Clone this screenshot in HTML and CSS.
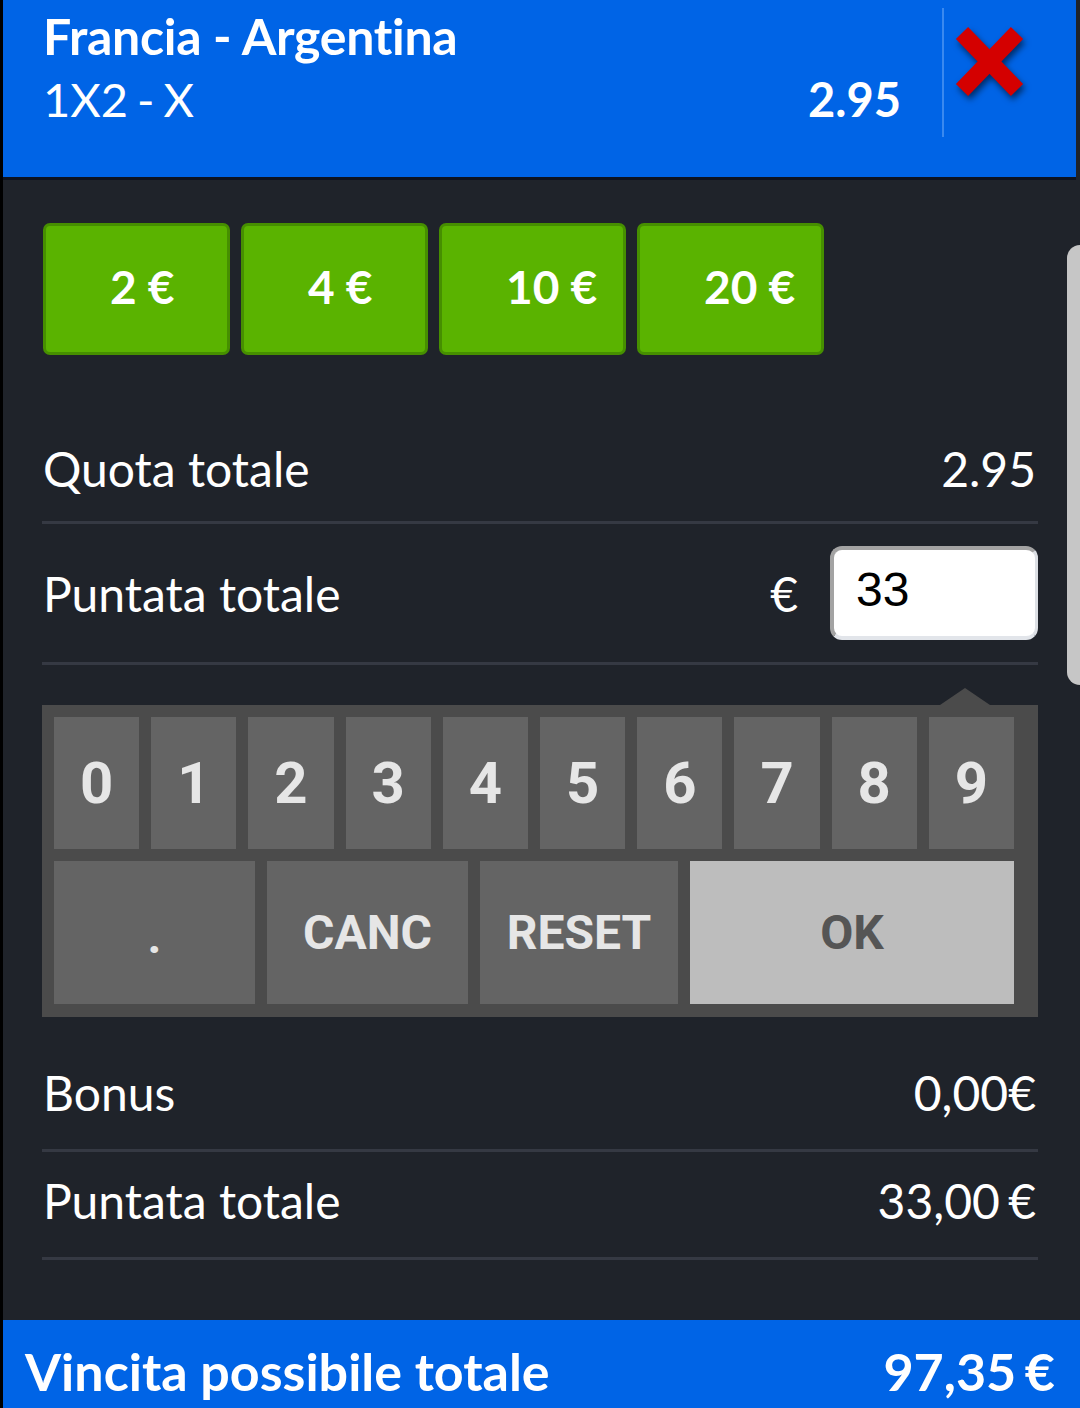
FILE: index.html
```html
<!DOCTYPE html>
<html lang="it">
<head>
    <meta charset="UTF-8">
    <meta name="viewport" content="width=device-width, initial-scale=1.0">
    <title>Schedina - Francia - Argentina</title>
    <link rel="stylesheet" href="styles.css">
</head>
<body>

    <div class="page">
        <div class="bet-header">
            <div class="bet-info">
                <div class="bet-match">Francia - Argentina</div>
                <div class="bet-line">
                    <span class="bet-outcome">1X2 - X</span>
                    <span class="bet-odd">2.95</span>
                </div>
            </div>
            <div class="bet-divider"></div>
            <button class="bet-close" aria-label="Rimuovi">
                <svg viewBox="0 0 80 80" width="80" height="80">
                    <line x1="12" y1="11" x2="67" y2="68" stroke="#d40000" stroke-width="17"/>
                    <line x1="67" y1="11" x2="12" y2="68" stroke="#d40000" stroke-width="17"/>
                </svg>
            </button>
        </div>

        <div class="content">
            <div class="stakes">
                <button class="stake">2 €</button>
                <button class="stake">4 €</button>
                <button class="stake">10 €</button>
                <button class="stake">20 €</button>
            </div>

            <div class="row row-quota">
                <span>Quota totale</span>
                <span>2.95</span>
            </div>

            <div class="row row-stake">
                <span>Puntata totale</span>
                <div class="stake-input">
                    <span class="currency">€</span>
                    <div class="amount-box">33</div>
                </div>
            </div>

            <div class="keypad">
                <div class="keys-digits">
                    <button class="key">0</button>
                    <button class="key">1</button>
                    <button class="key">2</button>
                    <button class="key">3</button>
                    <button class="key">4</button>
                    <button class="key">5</button>
                    <button class="key">6</button>
                    <button class="key">7</button>
                    <button class="key">8</button>
                    <button class="key">9</button>
                </div>
                <div class="keys-actions">
                    <button class="key key-action key-dot">.</button>
                    <button class="key key-action">CANC</button>
                    <button class="key key-action">RESET</button>
                    <button class="key key-action key-ok">OK</button>
                </div>
            </div>

            <div class="row row-bonus">
                <span>Bonus</span>
                <span>0,00€</span>
            </div>

            <div class="row row-total">
                <span>Puntata totale</span>
                <span class="tight">33,00 €</span>
            </div>
        </div>

        <div class="win-bar">
            <span>Vincita possibile totale</span>
            <span class="tight">97,35 €</span>
        </div>

        <!-- scroll indicator on the right side -->
        <div class="scroll-thumb"></div>
    </div>

</body>
</html>
```

FILE: styles.css
```css
* {
    box-sizing: border-box;
}

body {
    margin: 0;
    background-color: #000000;
    font-family: 'Lato', 'Open Sans', sans-serif;
    color: #ffffff;
}

button {
    font-family: inherit;
    border: none;
    cursor: pointer;
    padding: 0;
}

.page {
    position: relative;
    margin-left: 3px;
    min-height: 1408px;
    background-color: #1f232a;
    overflow: hidden;
}

/* Header with the selected match */
.bet-header {
    display: flex;
    height: 180px;
    margin-right: 4px;
    background-color: #0064e6;
    border-bottom: 3px solid #0d1320;
}

.bet-info {
    width: 898px;
    padding: 6px 0 0 40px;
}

.bet-match {
    font-size: 50px;
    font-weight: 700;
    line-height: 60px;
    letter-spacing: -0.3px;
}

.bet-line {
    display: flex;
    justify-content: space-between;
    margin-top: 4px;
    font-size: 47px;
    line-height: 58px;
}

.bet-outcome {
    word-spacing: -3px;
}

.bet-odd {
    font-weight: 700;
}

.bet-divider {
    width: 2px;
    height: 129px;
    margin: 8px 0 0 41px;
    background-color: #3a89ef;
}

.bet-close {
    width: 80px;
    height: 80px;
    margin: 22px 0 0 6px;
    background: none;
}

.bet-close svg {
    display: block;
    filter: drop-shadow(2px 4px 3px rgba(0, 0, 0, 0.55));
}

/* Main content */
.content {
    padding: 0 42px 0 39px;
}

.stakes {
    display: flex;
    gap: 11px;
    margin: 43px 0 0 1px;
}

.stake {
    width: 187px;
    height: 132px;
    padding: 0 0 6px 64px;
    text-align: left;
    font-size: 46px;
    font-weight: 700;
    color: #ffffff;
    background-color: #5ab300;
    border: 3px solid #468f00;
    border-radius: 7px;
}

.row {
    display: flex;
    justify-content: space-between;
    align-items: center;
    font-size: 48px;
    border-bottom: 3px solid #353943;
    padding: 0 2px 0 1px;
}

.tight {
    word-spacing: -4px;
}

.row-quota {
    height: 108px;
    margin-top: 61px;
}

.row-stake {
    height: 141px;
}

.stake-input {
    display: flex;
    align-items: center;
}

.currency {
    margin-right: 32px;
}

.amount-box {
    width: 208px;
    height: 94px;
    padding: 12px 0 0 22px;
    font-family: 'Liberation Sans', Arial, sans-serif;
    font-size: 48px;
    color: #000000;
    background-color: #ffffff;
    border-style: solid;
    border-width: 4px 3px 4px 4px;
    border-color: #a3a3a3 #dcdfe4 #e2e5ea #a3a3a3;
    border-radius: 12px;
    margin-right: -2px;
}

/* Numeric keypad */
.keypad {
    position: relative;
    margin-top: 40px;
    padding: 12px 24px 13px 12px;
    background-color: #4b4b4b;
    font-family: 'Roboto', sans-serif;
}

.keypad::before {
    content: "";
    position: absolute;
    top: -17px;
    left: 898px;
    border-left: 25px solid transparent;
    border-right: 25px solid transparent;
    border-bottom: 17px solid #4b4b4b;
}

.keys-digits {
    display: flex;
    gap: 12px;
}

.keys-actions {
    display: grid;
    grid-template-columns: 201px 201px 198px 1fr;
    gap: 12px;
    margin-top: 12px;
}

.key {
    flex: 1;
    height: 132px;
    font-family: 'Roboto', sans-serif;
    font-size: 58px;
    font-weight: 700;
    color: #e6e6e6;
    background-color: #646464;
}

.key-action {
    height: 143px;
    font-size: 48px;
}

.key-dot {
    padding-top: 8px;
}

.key-ok {
    color: #555555;
    background-color: #bdbdbd;
}

.row-bonus {
    height: 117px;
    margin-top: 18px;
}

.row-total {
    height: 108px;
    padding-bottom: 9px;
}

/* Bottom bar */
.win-bar {
    display: flex;
    justify-content: space-between;
    margin-top: 60px;
    height: 130px;
    padding: 21px 25px 0 22px;
    background-color: #0064e6;
    font-size: 52px;
    font-weight: 700;
    line-height: 60px;
}

.scroll-thumb {
    position: absolute;
    top: 245px;
    right: 0;
    width: 13px;
    height: 440px;
    background-color: #c6c6c6;
    border-radius: 14px 0 0 14px;
}
```
